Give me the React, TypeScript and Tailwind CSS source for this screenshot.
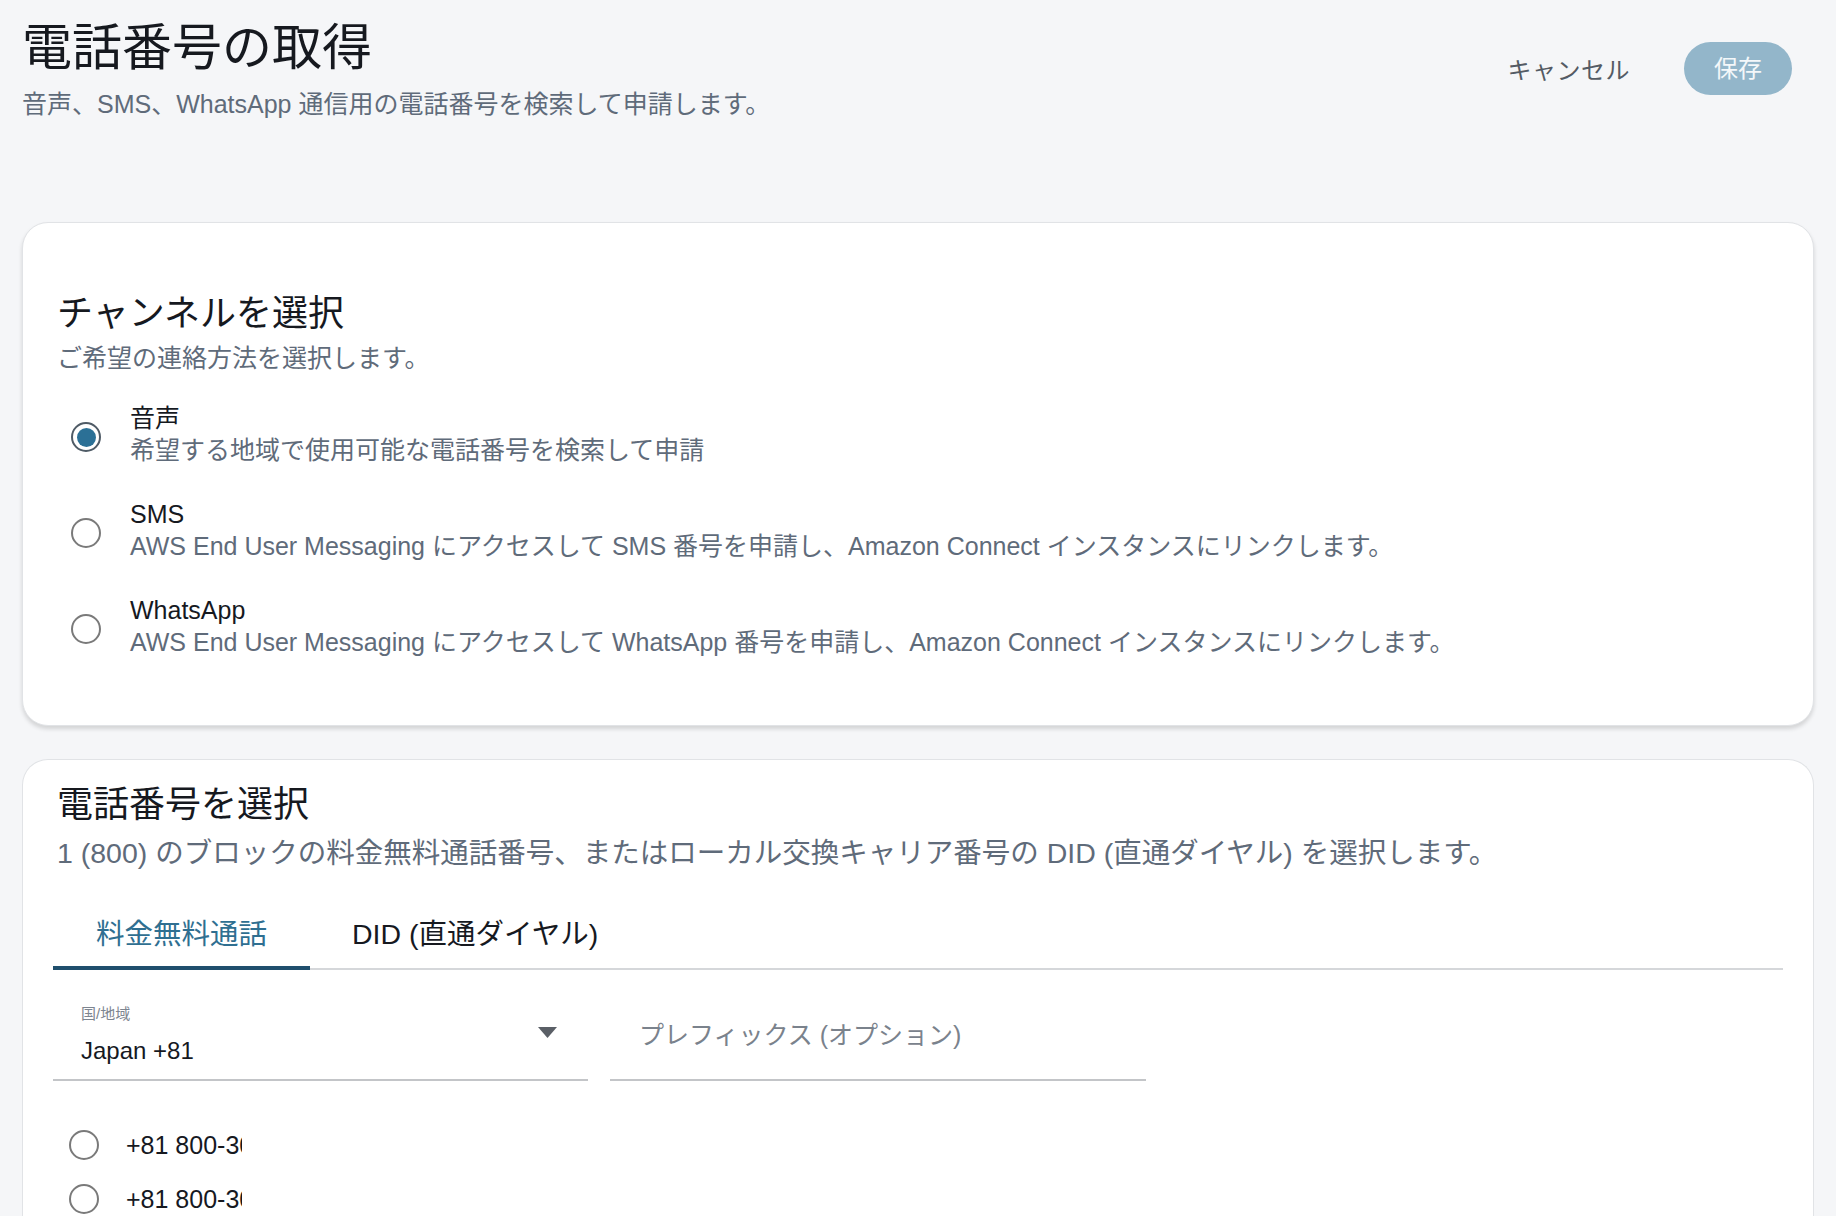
import { useState } from 'react'

const font = { fontFamily: '"Liberation Sans", "Noto Sans CJK JP", sans-serif' }

const channels = [
  { id: 'voice', label: '音声', desc: '希望する地域で使用可能な電話番号を検索して申請' },
  {
    id: 'sms',
    label: 'SMS',
    desc: 'AWS End User Messaging にアクセスして SMS 番号を申請し、Amazon Connect インスタンスにリンクします。',
  },
  {
    id: 'whatsapp',
    label: 'WhatsApp',
    desc: 'AWS End User Messaging にアクセスして WhatsApp 番号を申請し、Amazon Connect インスタンスにリンクします。',
  },
]

const numbers = ['+81 800-300-1001', '+81 800-300-1002', '+81 800-300-1003']

function Radio({ checked }: { checked: boolean }) {
  return checked ? (
    <span className="flex h-[30px] w-[30px] shrink-0 items-center justify-center rounded-full border-2 border-[#4f5b66] bg-white">
      <span className="h-[19px] w-[19px] rounded-full bg-[#2b7096]" />
    </span>
  ) : (
    <span className="block h-[30px] w-[30px] shrink-0 rounded-full border-2 border-[#7a7a7a] bg-white" />
  )
}

export default function App() {
  const [channel, setChannel] = useState('voice')
  const [tab, setTab] = useState(0)
  const [picked, setPicked] = useState<number | null>(null)

  return (
    <div className="min-h-screen bg-[#f5f6f8] px-[22px] pt-[18px] text-[#16191f]" style={font}>
      <header className="flex items-start justify-between">
        <div>
          <h1 className="text-[50px] leading-[60px] font-normal">電話番号の取得</h1>
          <p className="mt-[10px] text-[25px] leading-[32px] text-[#5f6b7a]">
            音声、SMS、WhatsApp 通信用の電話番号を検索して申請します。
          </p>
        </div>
        <div className="mt-[24px] mr-[22px] flex items-center gap-[54px]">
          <button className="mt-[4px] text-[24px] tracking-[0.02em] text-[#545b64]">キャンセル</button>
          <button className="h-[53px] rounded-full bg-[#93b6ca] px-[30px] text-[24px] text-white/90">
            保存
          </button>
        </div>
      </header>

      <section className="mt-[102px] rounded-[26px] border border-[#e1e3e6] bg-white px-[34px] pt-[69px] pb-[67px] shadow-[0_3px_4px_rgba(0,0,0,0.14)]">
        <h2 className="text-[36px] leading-[44px]">チャンネルを選択</h2>
        <p className="mt-[6px] text-[25px] leading-[32px] text-[#5f6b7a]">
          ご希望の連絡方法を選択します。
        </p>
        <div className="mt-[28px] flex flex-col gap-[32px]">
          {channels.map((c) => (
            <label
              key={c.id}
              className="ml-[14px] flex cursor-pointer items-center gap-[29px]"
              onClick={() => setChannel(c.id)}
            >
              <span className="mt-[6px] block">
                <Radio checked={channel === c.id} />
              </span>
              <span className="flex flex-col">
                <span className="text-[25px] leading-[32px]">{c.label}</span>
                <span className="text-[25px] leading-[32px] text-[#5f6b7a]">{c.desc}</span>
              </span>
            </label>
          ))}
        </div>
      </section>

      <section className="mt-[33px] rounded-t-[26px] border border-b-0 border-[#e1e3e6] bg-white pt-[23px] pr-[30px] pl-[34px] pb-[40px]">
        <h2 className="text-[36px] leading-[44px]">電話番号を選択</h2>
        <p className="mt-[8px] text-[28.5px] leading-[36px] text-[#5f6b7a]">
          1 (800) のブロックの料金無料通話番号、またはローカル交換キャリア番号の DID (直通ダイヤル) を選択します。
        </p>

        <div className="mt-[26px] ml-[-4px] flex border-b-2 border-[#d5d7da]">
          {['料金無料通話', 'DID (直通ダイヤル)'].map((t, i) => (
            <button
              key={t}
              onClick={() => setTab(i)}
              className={
                tab === i
                  ? 'mb-[-2px] border-b-[4px] border-[#1f4f6d] px-[43px] pt-[19px] pb-[14px] text-[28.5px] leading-[36px] text-[#2f6f91]'
                  : 'mb-[-2px] border-b-[4px] border-transparent px-[42px] pt-[19px] pb-[14px] text-[28.5px] leading-[36px] text-[#16191f]'
              }
            >
              {t}
            </button>
          ))}
        </div>

        <div className="mt-[20px] ml-[-4px] flex gap-[22px]">
          <div className="flex h-[91px] w-[535px] items-center justify-between border-b-2 border-[#c3c5c8] pr-[31px] pl-[28px]">
            <div className="flex flex-col">
              <span className="text-[15px] leading-[20px] text-[#7d8590]">国/地域</span>
              <span className="mt-[12px] text-[24px] leading-[30px]">Japan +81</span>
            </div>
            <svg width="19" height="11" viewBox="0 0 19 11" className="mt-[-4px]">
              <path d="M0 0h19L9.5 11z" fill="#5a5f66" />
            </svg>
          </div>
          <div className="flex h-[91px] w-[536px] items-center border-b-2 border-[#c3c5c8] pl-[29px]">
            <span className="text-[25px] leading-[30px] text-[#7a828c]">プレフィックス (オプション)</span>
          </div>
        </div>

        <div className="mt-[37px] flex flex-col">
          {numbers.map((n, i) => (
            <label
              key={n}
              className="ml-[12px] flex h-[54px] cursor-pointer items-center gap-[27px]"
              onClick={() => setPicked(i)}
            >
              <Radio checked={picked === i} />
              <span className="w-[116px] overflow-hidden text-[25px] leading-[32px] whitespace-nowrap">{n}</span>
            </label>
          ))}
        </div>
      </section>
    </div>
  )
}
